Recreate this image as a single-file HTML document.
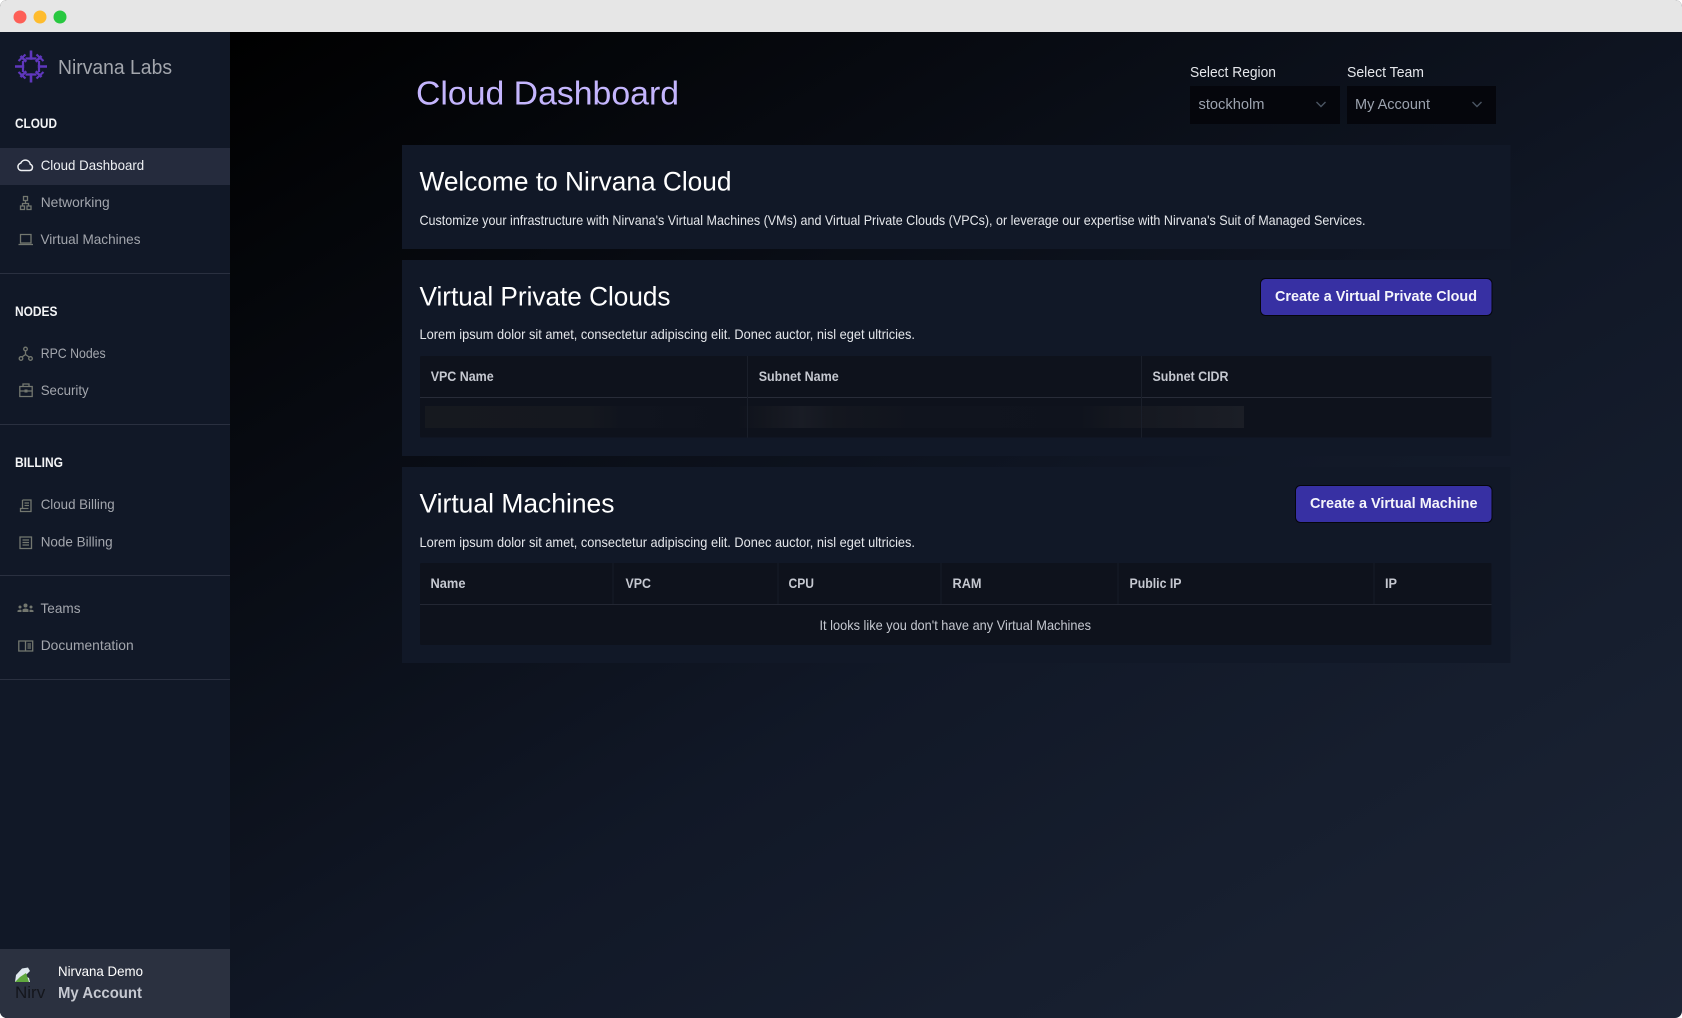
<!DOCTYPE html>
<html><head><meta charset="utf-8"><title>Cloud Dashboard</title>
<style>
html,body{margin:0;padding:0;width:1682px;height:1018px;overflow:hidden;background:#fff}
#w{position:absolute;left:0;top:0;width:1682px;height:1018px;overflow:hidden;border-radius:7px;background:linear-gradient(to bottom right,#000 8%,#111827 60%,#1c2536 100%)}
svg{position:absolute;left:0;top:0;display:block}
text{font-family:"Liberation Sans",Arial,sans-serif}
.n{font-size:14px;fill:#a3a6ad}
.s{font-size:14px;font-weight:700;fill:#f3f4f6}
.h{font-size:27px;fill:#fff}
.p{font-size:14px;fill:#e5e7eb}
.t{font-size:13.5px;font-weight:700;fill:#c5c8d0}
.b{font-size:15px;font-weight:700;fill:#f4f4fb}
.i{fill:none;stroke:#73776f;stroke-width:1.3}
</style></head><body><div id="w">
<svg width="1682" height="1018" viewBox="0 0 1682 1018">
<defs>
<linearGradient id="sk" x1="0" x2="1" y1="0" y2="0">
<stop offset="0" stop-color="#16191f"/><stop offset=".2" stop-color="#15181f"/><stop offset=".24" stop-color="#10141e"/><stop offset=".38" stop-color="#0e121c"/><stop offset=".42" stop-color="#14171f"/><stop offset=".46" stop-color="#191c25"/><stop offset=".5" stop-color="#14171f"/><stop offset=".6" stop-color="#10141e"/><stop offset=".8" stop-color="#0f131d"/><stop offset=".84" stop-color="#14171f"/><stop offset="1" stop-color="#1b1e26"/>
</linearGradient>
<clipPath id="av"><rect x="14" y="960" width="31" height="48"/></clipPath>
</defs>
<!-- title bar -->
<rect width="1682" height="32" fill="#e6e6e6"/>
<circle cx="20" cy="17" r="6.5" fill="#fd5f57"/><circle cx="40" cy="17" r="6.5" fill="#febc2e"/><circle cx="60" cy="17" r="6.5" fill="#28c840"/>
<!-- sidebar -->
<rect y="32" width="230" height="986" fill="#111827"/>
<g stroke="#5f37bd" fill="none" stroke-width="2.6">
<path d="M31 50.500v32M15 66.500h32M20.500 56l21 21M41.500 56l-21 21"/>
<path d="M25.500 58.500l11 0M25.500 74.500l11 0M23 61v11M39 61v11" stroke-width="2.200"/>
<path d="M18.500 61l7-6.500M36.500 54.500l7 6.500M18.500 72l7 6.500M36.500 78.500l7-6.500" stroke-width="2.200"/>
</g>
<circle cx="31" cy="66.500" r="6.800" fill="#111827"/>
<text x="58" y="74" font-size="20" fill="#a3a6ad" textLength="114" lengthAdjust="spacingAndGlyphs">Nirvana Labs</text>
<text class="s" x="15" y="128" textLength="42" lengthAdjust="spacingAndGlyphs">CLOUD</text>
<rect y="148" width="230" height="37" fill="#252b3d"/>
<text class="n" style="fill:#eef0f3" x="40.7" y="170" textLength="103.5" lengthAdjust="spacingAndGlyphs">Cloud Dashboard</text>
<path d="M21 170.500h8.500a3.200 3.200 0 0 0 .8-6.200 5 5 0 0 0-9.500-1.200 3.800 3.800 0 0 0 .2 7.400z" fill="none" stroke="#eef0f3" stroke-width="1.500"/>
<text class="n" x="40.7" y="207" textLength="69" lengthAdjust="spacingAndGlyphs">Networking</text>
<path class="i" d="M23.500 196.500h4v4h-4zM20.500 206h4v3.500h-4zM27 206h4v3.500h-4zM25.500 200.500v3M22.500 206v-2.500h6V206"/>
<text class="n" x="40.500" y="244" textLength="100" lengthAdjust="spacingAndGlyphs">Virtual Machines</text>
<path class="i" d="M20.500 234.500h10.500v8.500h-10.500zM18.500 244.500h14.500"/>
<rect y="273" width="230" height="1" fill="#2a3040"/>
<text class="s" x="15" y="316" textLength="42.500" lengthAdjust="spacingAndGlyphs">NODES</text>
<text class="n" x="40.700" y="358" textLength="65" lengthAdjust="spacingAndGlyphs">RPC Nodes</text>
<path class="i" d="M25.500 351v3.500l-3.500 2.500M25.500 354.500l3.500 2.500"/>
<circle class="i" cx="25.500" cy="349" r="1.800"/><circle class="i" cx="21" cy="358.500" r="1.800"/><circle class="i" cx="30.500" cy="358.500" r="1.800"/>
<text class="n" x="40.700" y="395" textLength="48" lengthAdjust="spacingAndGlyphs">Security</text>
<path class="i" d="M19.800 386.500h12.400v10h-12.400zM23 386.500v-2.500h6v2.500M19.800 391h12.400"/><rect x="24.500" y="389.500" width="3" height="3" fill="#73776f"/>
<rect y="424" width="230" height="1" fill="#2a3040"/>
<text class="s" x="15" y="467" textLength="48" lengthAdjust="spacingAndGlyphs">BILLING</text>
<text class="n" x="40.700" y="509" textLength="74" lengthAdjust="spacingAndGlyphs">Cloud Billing</text>
<path class="i" d="M22.500 500h8.500v11.500h-10.500v-3h8M22.500 500v8.500M24.500 503h4.500M24.500 505.500h4.500"/>
<text class="n" x="40.700" y="546.500" textLength="72" lengthAdjust="spacingAndGlyphs">Node Billing</text>
<path class="i" d="M20 537h11.500v11.500h-11.500zM22.500 540h6.500M22.500 542.500h6.500M22.500 545h6.500"/>
<rect y="575" width="230" height="1" fill="#2a3040"/>
<text class="n" x="40.500" y="613" textLength="40" lengthAdjust="spacingAndGlyphs">Teams</text>
<g fill="#73776f"><circle cx="25.500" cy="605.500" r="2"/><circle cx="20" cy="607" r="1.500"/><circle cx="31" cy="607" r="1.500"/><path d="M22.500 612v-2.500q3-2 6 0v2.500zM17.500 612v-1.500q2.500-1.500 4-.5v2zM29.500 612v-2q1.500-1 4 .5v1.500z"/></g>
<text class="n" x="40.700" y="650" textLength="93" lengthAdjust="spacingAndGlyphs">Documentation</text>
<path class="i" d="M18.800 641h6.700v10h-6.700zM25.500 641h7.200v10h-7.200zM27.500 644h3.500M27.500 646h3.500M27.500 648h3.500"/>
<rect y="679" width="230" height="1" fill="#2a3040"/>
<rect y="949" width="230" height="69" fill="#2b3140"/>
<path d="M15 982l1-7 6-6.500 6-1 2 3.500-5 5 4 2 1 4z" fill="#dfe8ee"/><path d="M15 982l5-5 6-4 3 9z" fill="#5fa83e"/>
<text x="15" y="998" font-size="17" fill="#14161c" clip-path="url(#av)">Nirvana</text>
<text x="58" y="976" font-size="14" fill="#fff" textLength="85" lengthAdjust="spacingAndGlyphs">Nirvana Demo</text>
<text x="58" y="998" font-size="16" font-weight="700" fill="#c5c8d0" textLength="84" lengthAdjust="spacingAndGlyphs">My Account</text>
<!-- header -->
<text x="416" y="104.500" font-size="33" fill="#c4b5fd" textLength="263" lengthAdjust="spacingAndGlyphs">Cloud Dashboard</text>
<text x="1190" y="77" font-size="15" fill="#e5e7eb" textLength="86" lengthAdjust="spacingAndGlyphs">Select Region</text>
<text x="1347" y="77" font-size="15" fill="#e5e7eb" textLength="77" lengthAdjust="spacingAndGlyphs">Select Team</text>
<rect x="1190" y="86" width="150" height="38" fill="#05060c"/>
<rect x="1347" y="86" width="149" height="38" fill="#05060c"/>
<text x="1198.500" y="109" font-size="15" fill="#9ca3af" textLength="66" lengthAdjust="spacingAndGlyphs">stockholm</text>
<text x="1355" y="109" font-size="15" fill="#9ca3af" textLength="75" lengthAdjust="spacingAndGlyphs">My Account</text>
<path d="M1316.500 102l4.500 4.500 4.500-4.500M1472.500 102l4.500 4.500 4.500-4.500" fill="none" stroke="#4b5563" stroke-width="1.400"/>
<!-- panels -->
<rect x="402" y="145" width="1108.500" height="104" fill="#111827"/>
<rect x="402" y="260" width="1108.500" height="196" fill="#111827"/>
<rect x="402" y="467" width="1108.500" height="196" fill="#111827"/>
<text class="h" x="419.500" y="190.500" textLength="312" lengthAdjust="spacingAndGlyphs">Welcome to Nirvana Cloud</text>
<text class="p" x="419.500" y="225" textLength="946" lengthAdjust="spacingAndGlyphs">Customize your infrastructure with Nirvana's Virtual Machines (VMs) and Virtual Private Clouds (VPCs), or leverage our expertise with Nirvana's Suit of Managed Services.</text>
<text class="h" x="419.500" y="305.500" textLength="251" lengthAdjust="spacingAndGlyphs">Virtual Private Clouds</text>
<rect x="1260.500" y="278.500" width="231.500" height="37" rx="5" fill="#3730a3" stroke="#05060c"/>
<text class="b" x="1275" y="301" textLength="202" lengthAdjust="spacingAndGlyphs">Create a Virtual Private Cloud</text>
<text class="p" x="419.500" y="339" textLength="495.500" lengthAdjust="spacingAndGlyphs">Lorem ipsum dolor sit amet, consectetur adipiscing elit. Donec auctor, nisl eget ultricies.</text>
<!-- VPC table -->
<rect x="420" y="356" width="1071.500" height="81.500" rx="1.500" fill="#0e121c"/>
<rect x="425" y="406" width="819" height="22" fill="url(#sk)"/>
<rect x="420" y="397" width="1071.500" height="1" fill="#282c38"/>
<rect x="747" y="356" width="1" height="81.500" fill="#1a1f2a"/><rect x="1141" y="356" width="1" height="81.500" fill="#1a1f2a"/>
<text class="t" x="430.700" y="381" textLength="63" lengthAdjust="spacingAndGlyphs">VPC Name</text>
<text class="t" x="758.700" y="381" textLength="80" lengthAdjust="spacingAndGlyphs">Subnet Name</text>
<text class="t" x="1152.500" y="381" textLength="76" lengthAdjust="spacingAndGlyphs">Subnet CIDR</text>
<!-- VM panel -->
<text class="h" x="419.500" y="512.500" textLength="195" lengthAdjust="spacingAndGlyphs">Virtual Machines</text>
<rect x="1295.500" y="485.500" width="196.500" height="37" rx="5" fill="#3730a3" stroke="#05060c"/>
<text class="b" x="1310" y="508" textLength="167.500" lengthAdjust="spacingAndGlyphs">Create a Virtual Machine</text>
<text class="p" x="419.500" y="547" textLength="495.500" lengthAdjust="spacingAndGlyphs">Lorem ipsum dolor sit amet, consectetur adipiscing elit. Donec auctor, nisl eget ultricies.</text>
<rect x="420" y="563" width="1071.500" height="82" rx="1.500" fill="#0e121c"/>
<rect x="420" y="604" width="1071.500" height="1" fill="#232733"/>
<g fill="#171c27"><rect x="612.500" y="563" width="1" height="41"/><rect x="777.500" y="563" width="1" height="41"/><rect x="940.500" y="563" width="1" height="41"/><rect x="1117.500" y="563" width="1" height="41"/><rect x="1373.500" y="563" width="1" height="41"/></g>
<text class="t" x="430.500" y="588" textLength="35" lengthAdjust="spacingAndGlyphs">Name</text>
<text class="t" x="625.500" y="588" textLength="25.500" lengthAdjust="spacingAndGlyphs">VPC</text>
<text class="t" x="788.500" y="588" textLength="25.500" lengthAdjust="spacingAndGlyphs">CPU</text>
<text class="t" x="952.500" y="588" textLength="29" lengthAdjust="spacingAndGlyphs">RAM</text>
<text class="t" x="1129.500" y="588" textLength="52" lengthAdjust="spacingAndGlyphs">Public IP</text>
<text class="t" x="1385" y="588" textLength="12" lengthAdjust="spacingAndGlyphs">IP</text>
<text x="819.500" y="630" font-size="14" fill="#c5c8d0" textLength="271.500" lengthAdjust="spacingAndGlyphs">It looks like you don't have any Virtual Machines</text>
</svg>
</div></body></html>
